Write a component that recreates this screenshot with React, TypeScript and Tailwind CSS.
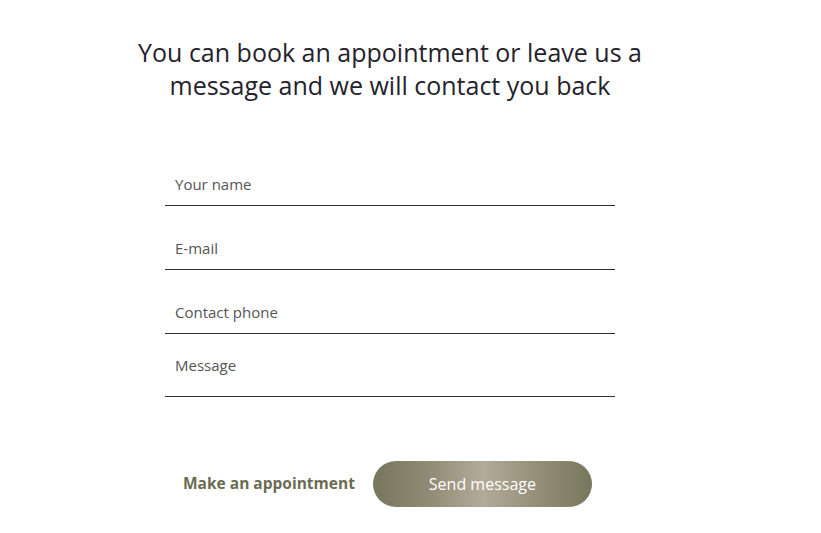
export default function App() {
  const fields = ["Your name", "E-mail", "Contact phone"];
  return (
    <div className="min-h-screen bg-white font-['Open_Sans','Noto_Sans',sans-serif]">
      <div className="ml-[110px] w-[560px] pt-[36px]">
        <h2 className="text-center text-[25px] leading-[33px] text-[#25222c]">
          You can book an appointment or leave us a message and we will contact you back
        </h2>
        <form className="ml-[55px] w-[450px] mt-[40px]">
          {fields.map((f) => (
            <div key={f} className="pt-[21px]">
              <input
                type="text"
                placeholder={f}
                className="block w-full h-[43px] px-[10px] text-[15px] text-[#444] placeholder:text-[#555] border-b border-[#333] outline-none"
              />
            </div>
          ))}
          <textarea
            placeholder="Message"
            className="block w-full h-[63px] px-[10px] pt-[21px] text-[15px] leading-[20px] text-[#444] placeholder:text-[#555] border-b border-[#333] outline-none resize-none"
          />
          <div className="flex items-center mt-[64px] pl-[18px] gap-[18px]">
            <span className="text-[15.5px] font-bold text-[#6b6b52]">Make an appointment</span>
            <button
              type="button"
              className="w-[219px] h-[46px] rounded-full text-white text-[16px] bg-[linear-gradient(90deg,#77775d_0%,#8f8a74_25%,#b3aa99_50%,#958e78_75%,#77775d_100%)]"
            >
              Send message
            </button>
          </div>
        </form>
      </div>
    </div>
  );
}
